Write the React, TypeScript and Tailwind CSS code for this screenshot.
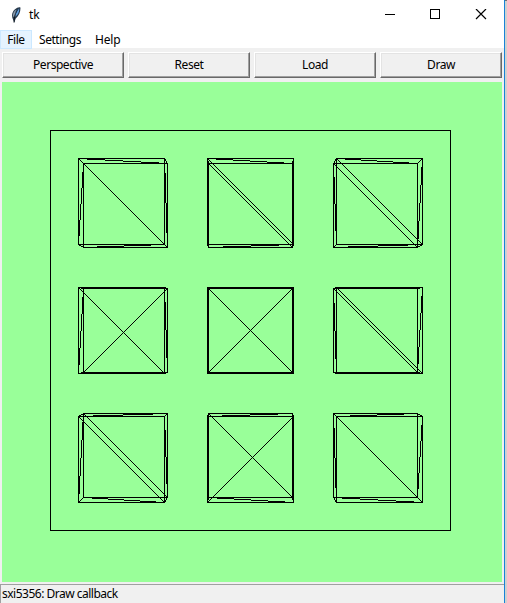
import React from "react";

type Point = [number, number];

// Bresenham line as one-pixel cells, giving the hard-edged strokes of a Tk canvas.
function line([x0, y0]: Point, [x1, y1]: Point): string {
  const dx = Math.abs(x1 - x0);
  const dy = -Math.abs(y1 - y0);
  const sx = x0 < x1 ? 1 : -1;
  const sy = y0 < y1 ? 1 : -1;
  let err = dx + dy;
  let x = x0;
  let y = y0;
  let d = "";
  for (;;) {
    d += `M${x} ${y}h1v1h-1z`;
    if (x === x1 && y === y1) return d;
    const e = 2 * err;
    if (e >= dy) {
      err += dy;
      x += sx;
    }
    if (e <= dx) {
      err += dx;
      y += sy;
    }
  }
}

function corners(x: number, y: number, size: number): Point[] {
  return [
    [x, y],
    [x + size, y],
    [x + size, y + size],
    [x, y + size],
  ];
}

function cube(col: number, row: number): string {
  const a = corners(76 + col * 129, 76 + row * 129, 86);
  const b = corners(81 + col * 125, 81 + row * 125, 84);
  let d = "";
  for (let i = 0; i < 4; i++) {
    const n = (i + 1) % 4;
    d += line(a[i], a[n]) + line(b[i], b[n]) + line(a[i], b[i]);
  }
  d += line(a[0], b[1]) + line(b[3], a[2]) + line(b[0], a[3]) + line(a[1], b[2]);
  const nearRising = row === 2 && col === 1;
  const farRising = row === 1 && col < 2;
  d += nearRising ? line(a[3], a[1]) : line(a[0], a[2]);
  d += farRising ? line(b[3], b[1]) : line(b[0], b[2]);
  return d;
}

const frame = corners(48, 48, 400);
const wires = [
  ...frame.map((p, i) => line(p, frame[(i + 1) % 4])),
  ...[0, 1, 2].flatMap((row) => [0, 1, 2].map((col) => cube(col, row))),
];

function Feather() {
  return (
    <svg className="ml-[11px] h-4 w-[10px]" viewBox="0 0 10 16">
      <path d="M2.2 13C0.2 9 .8 5 4 2.2C6 .4 8.4 -.4 9.4 .5C9.7 4.2 8.4 8.4 4.6 11.7L3.4 15.5" fill="#26384a" />
      <path d="M4 9.8C3 7 4.4 3.6 8.2 1.4C8.5 5 7 7.9 4 9.8Z" fill="#5f9fe0" />
      <path d="M2 9.4C1.5 6.5 3 4.3 5.2 2.6L3.2 10Z" fill="#8c9aa8" />
      <path d="M7 2.5C4.6 5.7 3.4 9 3 15.5" fill="none" stroke="#101820" strokeWidth="1" />
    </svg>
  );
}

function TkButton({ children }: { children: string }) {
  return (
    <button className="h-[26px] w-[122px] border border-t-white border-l-white border-r-[#696969] border-b-[#696969] bg-[#f0f0f0] p-0 text-center leading-[24px] shadow-[inset_-1px_-1px_0_#a0a0a0,inset_1px_1px_0_#e3e3e3]">
      {children}
    </button>
  );
}

export default function App() {
  return (
    <div className="flex h-[603px] w-[507px] overflow-hidden bg-[#d0d0d0] font-['Noto_Sans',sans-serif] text-[12px] tracking-[-0.45px] text-black">
      <div className="flex w-[504px] flex-col bg-[#f0f0f0]">
        <header className="flex h-[30px] items-center bg-white">
          <Feather />
          <span className="ml-2 tracking-normal">tk</span>
          <svg className="mt-[9px] mr-[17px] ml-auto h-[11px] w-[107px] self-start" viewBox="0 0 107 11" shapeRendering="crispEdges">
            <path d="M5 5.5H15M50.5 .5H59.5V9.5H50.5Z" fill="none" stroke="#000" />
            <path d="M96 0L106 10M106 0L96 10" fill="none" stroke="#000" strokeWidth="1.2" shapeRendering="auto" />
          </svg>
        </header>
        <nav className="flex h-[18px] bg-white leading-[18px]">
          <span className="h-[19px] w-8 border border-[#cce8ff] bg-[#e5f3ff] text-center">File</span>
          <span className="ml-[7px] w-[42px] pt-px whitespace-nowrap">Settings</span>
          <span className="ml-[14px] pt-px tracking-[-0.2px]">Help</span>
        </nav>
        <div className="flex h-[34px] gap-1 pt-1 pl-0.5">
          <TkButton>Perspective</TkButton>
          <TkButton>Reset</TkButton>
          <TkButton>Load</TkButton>
          <TkButton>Draw</TkButton>
        </div>
        <svg className="ml-0.5 h-[500px] w-[500px] shrink-0 bg-[#99ff99]" viewBox="0 0 500 500" shapeRendering="crispEdges">
          {wires.map((d, i) => (
            <path key={i} d={d} fill="#000" />
          ))}
        </svg>
        <footer className="mt-0.5 h-[19px] border-t border-l border-[#a0a0a0] pl-px leading-[18px] tracking-[-0.5px] whitespace-nowrap">
          sxi5356: Draw callback
        </footer>
      </div>
      <div className="w-px bg-[#1883d7]" />
      <div className="w-0.5 border-t border-[#707070] bg-[#d0d0d0]" />
    </div>
  );
}
